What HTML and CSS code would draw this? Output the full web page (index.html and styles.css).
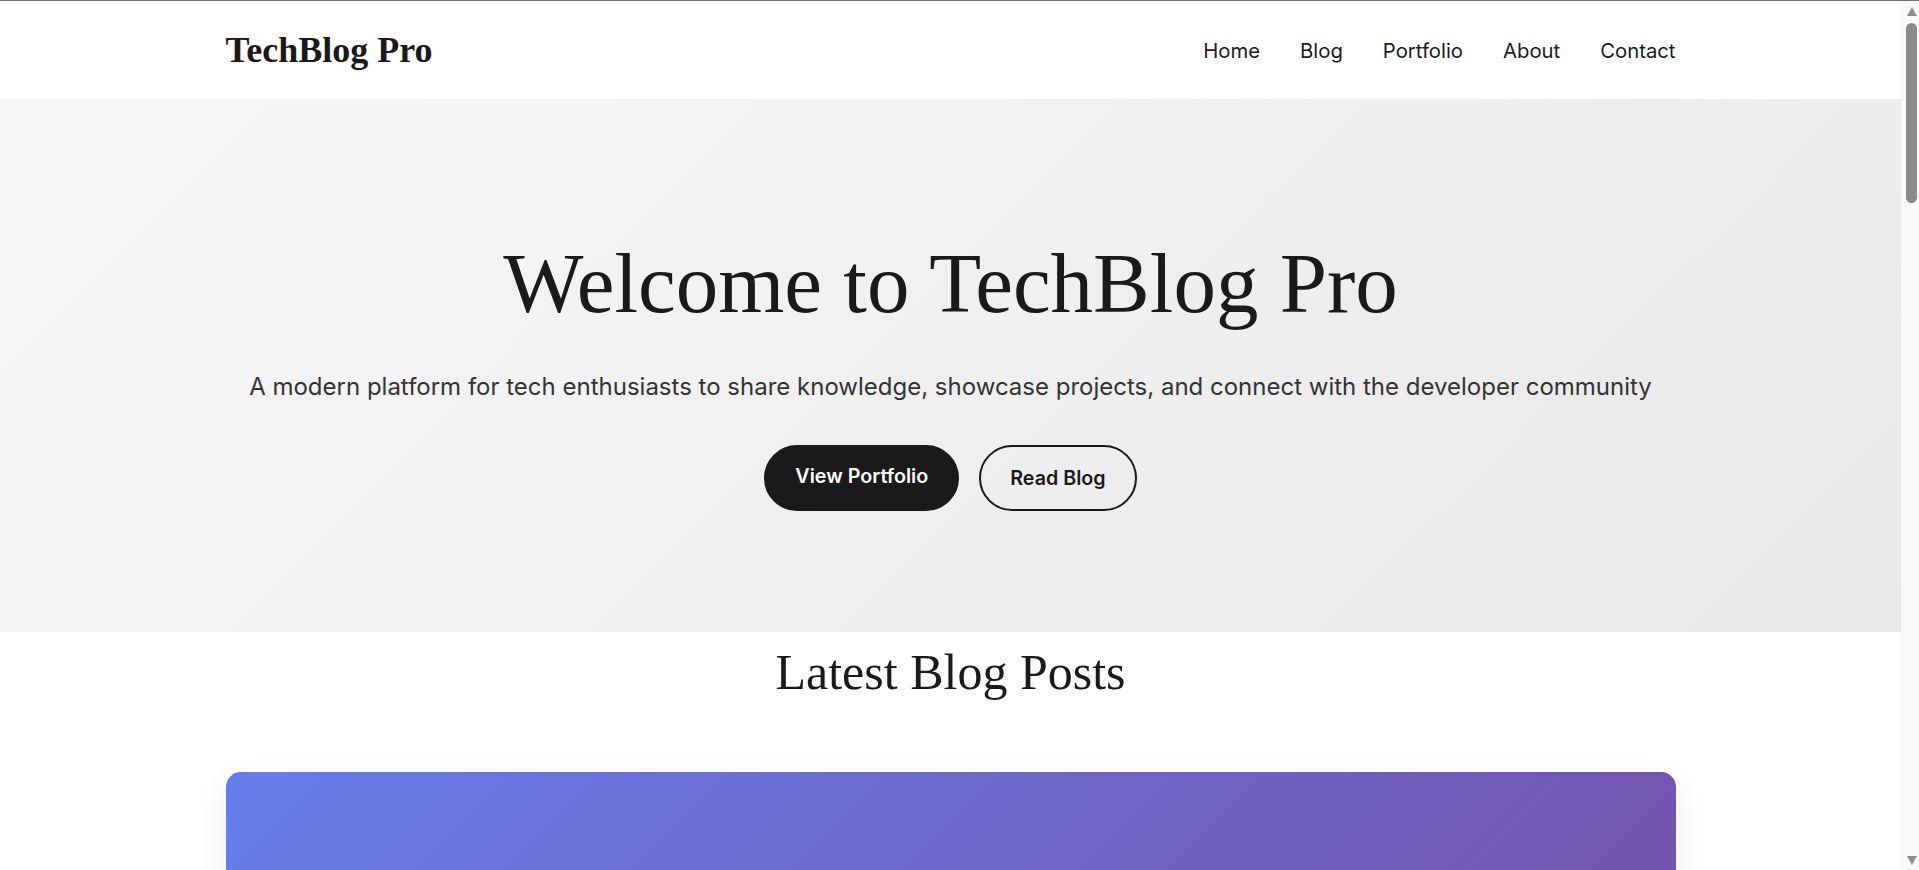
FILE: index.html
```html
<!DOCTYPE html>
<html lang="en">
<head>
<meta charset="UTF-8">
<title>TechBlog Pro</title>
<link rel="stylesheet" href="styles.css">
</head>
<body>
<div class="page">
  <header class="site-header">
    <div class="container header-inner">
      <a class="logo" href="#">TechBlog Pro</a>
      <nav class="main-nav">
        <a href="#">Home</a>
        <a href="#">Blog</a>
        <a href="#">Portfolio</a>
        <a href="#">About</a>
        <a href="#">Contact</a>
      </nav>
    </div>
  </header>

  <section class="hero">
    <h1 class="hero-title">Welcome to TechBlog Pro</h1>
    <p class="hero-sub">A modern platform for tech enthusiasts to share knowledge, showcase projects, and connect with the developer community</p>
    <div class="hero-actions">
      <a class="btn btn-primary" href="#">View Portfolio</a>
      <a class="btn btn-outline" href="#">Read Blog</a>
    </div>
  </section>

  <section class="posts">
    <div class="container">
      <h2 class="section-title">Latest Blog Posts</h2>
      <div class="post-list">
        <article class="post-card">
          <div class="post-cover"></div>
          <div class="post-body">
            <h3>Building Scalable Web Applications</h3>
            <p>Learn the patterns and practices that help modern web applications grow gracefully.</p>
          </div>
        </article>
        <article class="post-card">
          <div class="post-cover cover-2"></div>
          <div class="post-body">
            <h3>A Practical Guide to TypeScript</h3>
            <p>Type safety without the pain: tips for adopting TypeScript in existing projects.</p>
          </div>
        </article>
        <article class="post-card">
          <div class="post-cover cover-3"></div>
          <div class="post-body">
            <h3>Getting Started with Docker</h3>
            <p>Containerize your development environment and ship with confidence.</p>
          </div>
        </article>
      </div>
    </div>
  </section>

  <section class="portfolio">
    <div class="container">
      <h2 class="section-title">Portfolio</h2>
      <div class="portfolio-grid">
        <div class="project">Project One</div>
        <div class="project">Project Two</div>
        <div class="project">Project Three</div>
      </div>
    </div>
  </section>

  <footer class="site-footer">
    <div class="container">
      <p>&copy; 2024 TechBlog Pro. All rights reserved.</p>
    </div>
  </footer>
</div>

<div class="scrollbar" aria-hidden="true">
  <span class="sb-arrow sb-up"></span>
  <span class="sb-thumb"></span>
  <span class="sb-spacer"></span>
  <span class="sb-arrow sb-down"></span>
</div>
</body>
</html>
```

FILE: styles.css
```css
* {
  box-sizing: border-box;
}

html, body {
  margin: 0;
  padding: 0;
  height: 100%;
  overflow: hidden;
}

body {
  font-family: Inter, "Noto Sans", sans-serif;
  color: #1a1a1a;
  background: #ffffff;
  border-top: 1px solid #6f6f6f;
  display: flex;
}

a {
  color: inherit;
  text-decoration: none;
}

.page {
  flex: 1;
  min-width: 0;
  height: 100%;
  overflow-y: auto;
  scrollbar-width: none;
}

.page::-webkit-scrollbar {
  display: none;
}

/* classic scrollbar look */
.scrollbar {
  width: 18px;
  flex: none;
  height: 100%;
  background: #f9f9f9;
  display: flex;
  flex-direction: column;
  align-items: center;
  padding: 6px 0 5px 3px;
}

.sb-arrow {
  width: 0;
  height: 0;
  border-left: 5.5px solid transparent;
  border-right: 5.5px solid transparent;
}

.sb-up {
  border-bottom: 9px solid #8f8f8f;
}

.sb-down {
  border-top: 9px solid #8f8f8f;
}

.sb-thumb {
  width: 11px;
  height: 180px;
  margin-top: 7px;
  border-radius: 6px;
  background: #8a8a8a;
}

.sb-spacer {
  flex: 1;
}

.container {
  max-width: 1450px;
  margin: 0 auto;
}

.site-header {
  background: #ffffff;
}

.header-inner {
  height: 98px;
  display: flex;
  align-items: center;
  justify-content: space-between;
}

.logo {
  font-family: "Liberation Serif", "Times New Roman", serif;
  font-weight: 700;
  font-size: 36px;
  color: #1a1a1a;
}

.main-nav {
  display: flex;
  gap: 40px;
  font-size: 20.3px;
  color: #1a1a1a;
}

.hero {
  height: 533px;
  background: linear-gradient(135deg, #f7f7f7 0%, #e8e8e8 100%);
  text-align: center;
  padding-top: 133px;
}

.hero-title {
  font-family: "Liberation Serif", "Times New Roman", serif;
  font-weight: 400;
  font-size: 85px;
  line-height: 1.2;
  margin: 0 0 34px;
  color: #1a1a1a;
}

.hero-sub {
  font-size: 24px;
  line-height: 1.6;
  color: #333333;
  margin: 0 0 39px;
}

.hero-actions {
  display: flex;
  justify-content: center;
  gap: 20px;
}

.btn {
  display: inline-block;
  padding: 17px 29px;
  border-radius: 50px;
  border: 2px solid #1a1a1a;
  font-weight: 600;
  font-size: 19.7px;
  line-height: 28px;
}

.btn-primary {
  background: #1a1a1a;
  color: #ffffff;
  padding-bottom: 19px;
  padding-top: 15px;
}

.btn-outline {
  background: transparent;
  color: #1a1a1a;
}

.posts {
  padding: 0 0 80px;
}

.section-title {
  font-family: "Liberation Serif", "Times New Roman", serif;
  font-weight: 400;
  font-size: 50px;
  line-height: 1.2;
  text-align: center;
  margin: 10px 0 70px;
}

.post-list {
  display: flex;
  flex-direction: column;
  gap: 48px;
}

.post-card {
  border-radius: 15px;
  overflow: hidden;
  box-shadow: 0 10px 30px rgba(0, 0, 0, 0.08);
  background: #ffffff;
}

.post-cover {
  height: 420px;
  background: linear-gradient(135deg, #667eea 0%, #764ba2 100%);
}

.cover-2 {
  background: linear-gradient(135deg, #f093fb 0%, #f5576c 100%);
}

.cover-3 {
  background: linear-gradient(135deg, #4facfe 0%, #00f2fe 100%);
}

.post-body {
  padding: 32px;
}

.post-body h3 {
  font-family: "Liberation Serif", "Times New Roman", serif;
  font-size: 32px;
  font-weight: 400;
  margin: 0 0 12px;
}

.post-body p {
  margin: 0;
  font-size: 18px;
  line-height: 1.6;
  color: #555555;
}

.portfolio {
  padding: 40px 0 80px;
  background: #f7f7f7;
}

.portfolio-grid {
  display: grid;
  grid-template-columns: repeat(3, 1fr);
  gap: 32px;
}

.project {
  height: 300px;
  border-radius: 15px;
  background: #ffffff;
  box-shadow: 0 10px 30px rgba(0, 0, 0, 0.08);
  display: flex;
  align-items: center;
  justify-content: center;
  font-size: 20px;
  font-weight: 600;
}

.site-footer {
  background: #1a1a1a;
  color: #ffffff;
  text-align: center;
  padding: 40px 0;
}

.site-footer p {
  margin: 0;
}
```
